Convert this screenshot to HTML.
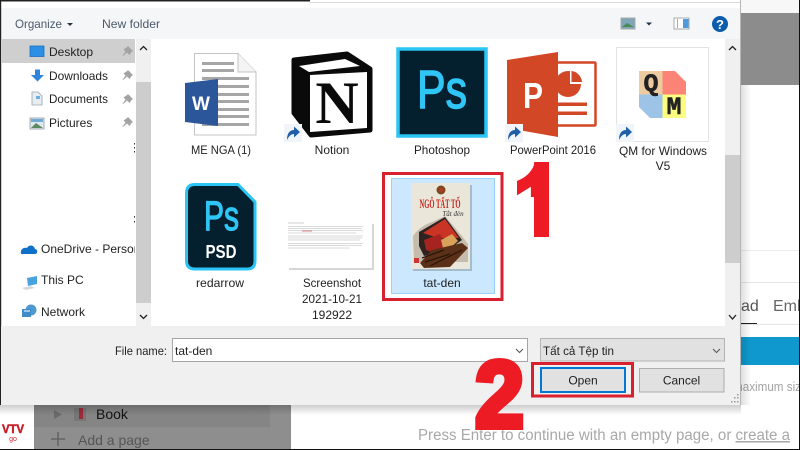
<!DOCTYPE html>
<html><head><meta charset="utf-8"><title>Open dialog</title>
<style>
html,body{margin:0;padding:0;background:#fff;width:800px;height:450px;overflow:hidden}
svg{display:block;filter:blur(.3px)}
text{font-family:"Liberation Sans","Noto Sans CJK JP",sans-serif}
.t{font-size:12px;fill:#1f1f1f}
.m{text-anchor:middle}
</style></head><body>
<svg width="800" height="450" viewBox="0 0 800 450" xmlns="http://www.w3.org/2000/svg">
<defs>
<linearGradient id="sr" x1="0" x2="1" y1="0" y2="0"><stop offset="0" stop-color="#000" stop-opacity=".28"/><stop offset="1" stop-color="#000" stop-opacity="0"/></linearGradient>
<linearGradient id="sb" x1="0" x2="0" y1="0" y2="1"><stop offset="0" stop-color="#000" stop-opacity=".28"/><stop offset="1" stop-color="#000" stop-opacity="0"/></linearGradient>
<clipPath id="navclip"><rect x="0" y="39" width="135" height="290"/></clipPath>
<clipPath id="one"><path d="M549 160 V237 H534 V197 H517 V181 Q530 176 534 165 V160Z"/></clipPath>
<g id="sc"><rect x="0" y="0" width="18" height="18" fill="#f1f4f8"/><path d="M3 16 C3 9 6 6 10 6 V2.500 L16 8 L10 13.500 V10 C7 10 5 12 3 16Z" fill="#1f5fa8"/></g>
<g id="pin" fill="#a3a3a3"><path d="M6 0 L11 5 L9.500 6 L7.500 9 L5 6.500 L1 10 L0.500 9.500 L3.500 5.500 L1.500 3.500 L4.500 1.500Z"/></g>
</defs>

<!-- backdrop -->
<rect width="800" height="450" fill="#fff"/>
<rect x="741" y="0" width="59" height="13" fill="#f7f7f7"/>
<rect x="741" y="13" width="59" height="72" fill="#8c8c8c"/>
<rect x="741" y="250" width="58" height="1" fill="#ececec"/>
<rect x="741" y="282" width="58" height="1" fill="#e6e6e6"/>
<text x="773" y="311" font-size="16" fill="#666">Emb</text>
<text x="741" y="311" font-size="16" fill="#555">ad</text>
<rect x="741" y="323" width="16" height="1.500" fill="#222"/>
<rect x="741" y="324" width="58" height="1" fill="#e6e6e6"/>
<rect x="741" y="337" width="58" height="28" fill="#0e98cd"/>
<text x="733" y="391" font-size="12.500" fill="#a3a3a3" textLength="68" lengthAdjust="spacingAndGlyphs">maximum siz</text>

<!-- bottom left page -->
<rect x="34" y="405" width="257" height="45" fill="#8e8e8e"/>
<rect x="34" y="405" width="236" height="22" fill="#858585"/>
<path d="M54 410 L62 414.500 L54 419Z" fill="#6a6a6a"/>
<rect x="74" y="408" width="12" height="13" fill="#777"/>
<rect x="79" y="408" width="4" height="11" fill="#a12a3a"/>
<text x="96" y="419" font-size="14" fill="#111">Book</text>
<path d="M58 432 V446 M51 439 H65" stroke="#5d5d5d" stroke-width="1.300" fill="none"/>
<text x="78" y="445" font-size="14" fill="#555">Add a page</text>
<rect x="0" y="405" width="34" height="45" fill="#fff"/>
<text x="13" y="433" class="m" font-size="12" font-weight="bold" fill="#c8202a" stroke="#c8202a" stroke-width=".5" textLength="22" lengthAdjust="spacingAndGlyphs">VTV</text>
<text x="13" y="441" class="m" font-size="7" fill="#c8202a">go</text>
<text x="418" y="440" font-size="15.500" fill="#a8a8a8" textLength="372" lengthAdjust="spacingAndGlyphs">Press Enter to continue with an empty page, or <tspan text-decoration="underline">create a</tspan></text>

<!-- shadows -->
<rect x="741" y="85" width="10" height="320" fill="url(#sr)" opacity=".45"/>
<rect x="0" y="405" width="741" height="10" fill="url(#sb)" opacity=".7"/>

<!-- dialog -->
<rect x="0" y="0" width="741" height="405" fill="#fff"/>
<rect x="1" y="8" width="740" height="31" fill="#f5f6f7"/>
<rect x="0" y="0" width="310" height="1.500" fill="#222"/>
<rect x="310" y="2" width="430" height="1" fill="#dcdcdc"/>
<rect x="0" y="0" width="1.200" height="405" fill="#222"/>
<rect x="1" y="326" width="740" height="79" fill="#f0f0f0"/>
<rect x="740" y="0" width="1" height="405" fill="#b5b5b5"/>
<rect x="0" y="449" width="800" height="1" fill="#111"/>
<rect x="799" y="0" width="1" height="450" fill="#111"/>

<!-- toolbar -->
<text x="15" y="28" font-size="12" fill="#4a5a6b" textLength="47" lengthAdjust="spacingAndGlyphs">Organize</text>
<path d="M67 23 H73 L70 26Z" fill="#263545"/>
<text x="102" y="28" font-size="12" fill="#4a5a6b" textLength="58" lengthAdjust="spacingAndGlyphs">New folder</text>
<rect x="621" y="18" width="14" height="11" fill="#7fa5b8" stroke="#a9a9a9"/>
<path d="M622 27 L627 23 L634 27Z" fill="#4c8a55"/>
<path d="M646 22.500 H652 L649 25.500Z" fill="#1a3050"/>
<rect x="674" y="18" width="15" height="11" fill="#fff" stroke="#a9a9a9"/>
<rect x="683" y="19" width="5.500" height="9" fill="#4f9be0"/>
<rect x="677" y="19" width="1" height="9" fill="#aaa"/>
<circle cx="720" cy="24" r="8" fill="#0b5cac"/>
<text x="720" y="29" class="m" font-size="13" font-weight="bold" fill="#fff">?</text>

<!-- nav pane -->
<rect x="1" y="39" width="134" height="24" fill="#cfcfcf"/>
<rect x="30" y="46" width="14" height="10.500" fill="#2b8fe3" stroke="#1570c0" stroke-width=".8"/>
<path d="M31 75 H35 V69.500 H40 V75 H44 L37.500 81.500Z" fill="#2f86d8"/>
<path d="M32 92 H38 L42 96 V105 H32Z" fill="#e8edf2" stroke="#9aa4ad" stroke-width=".8"/>
<rect x="36" y="96" width="4" height="3" fill="#6ab0e0"/>
<rect x="30" y="118" width="14" height="11" fill="#dfe8ef" stroke="#8a98a5" stroke-width=".8"/>
<path d="M31 128 L36 123 L43 128Z" fill="#5b8a60"/>
<rect x="31" y="119" width="12" height="3" fill="#6fa9d6"/>
<g class="t" clip-path="url(#navclip)">
<text x="49" y="56" class="t">Desktop</text>
<text x="49" y="80" class="t" textLength="59" lengthAdjust="spacingAndGlyphs">Downloads</text>
<text x="49" y="103" class="t" textLength="59" lengthAdjust="spacingAndGlyphs">Documents</text>
<text x="49" y="127" class="t">Pictures</text>
<text x="41" y="253" class="t">OneDrive - Personal</text>
<text x="41" y="284" class="t">This PC</text>
<text x="41" y="316" class="t">Network</text>
</g>
<use href="#pin" x="122" y="46"/><use href="#pin" x="122" y="70"/><use href="#pin" x="122" y="94"/><use href="#pin" x="122" y="117"/>
<rect x="134" y="143" width="1" height="1.500" fill="#333"/><rect x="134" y="147" width="1" height="1.500" fill="#333"/><rect x="134" y="151" width="1" height="1.500" fill="#333"/>
<rect x="134" y="216" width="1" height="1.500" fill="#333"/><rect x="134" y="221" width="1" height="1.500" fill="#333"/>
<path d="M21 254 C20 249 24 247 27 248 C29 244 34 245 35 249 C38 249 38 254 35 254Z" fill="#0f72c8"/>
<path d="M27 278 L37 276 V284 L28 286Z" fill="#4aa2dc"/><path d="M22 288 L31 286 L35 288 L26 290Z" fill="#d5d9dc"/>
<circle cx="31" cy="310" r="5.500" fill="#4e9ad0"/><rect x="22" y="309" width="9" height="8" fill="#3f8cc8"/><path d="M24 311 H30" stroke="#fff"/>

<rect x="136" y="39" width="15" height="287" fill="#f0f0f0"/>
<rect x="136" y="82" width="15" height="221" fill="#cdcdcd"/>
<path d="M140 50 L143.500 46.500 L147 50" stroke="#222" stroke-width="1.300" fill="none"/>
<path d="M140 315 L143.500 318.500 L147 315" stroke="#222" stroke-width="1.300" fill="none"/>

<rect x="725" y="39" width="15" height="287" fill="#f0f0f0"/>
<rect x="725" y="155" width="15" height="108" fill="#cdcdcd"/>
<path d="M729 50 L732.500 46.500 L736 50" stroke="#222" stroke-width="1.300" fill="none"/>
<path d="M729 315 L732.500 319 L736 315" stroke="#222" stroke-width="1.300" fill="none"/>

<!-- Word -->
<path d="M194.500 53.500 H238 L256 72 V135 H194.500Z" fill="#fff" stroke="#c4c4c4"/>
<path d="M238 53.500 V72 H256" fill="#f4f4f4" stroke="#c4c4c4"/>
<g fill="#a6a6a6"><rect x="202" y="62" width="32" height="3"/><rect x="202" y="69" width="32" height="3"/><rect x="202" y="77" width="47" height="3"/><rect x="202" y="85" width="47" height="3"/><rect x="217" y="93" width="32" height="3"/><rect x="217" y="100" width="32" height="3"/><rect x="217" y="108" width="32" height="3"/><rect x="217" y="115" width="32" height="3"/><rect x="202" y="123" width="47" height="3"/></g>
<path d="M185 83 L218 79 V126 L185 122Z" fill="#2b579a"/>
<text x="201" y="110" class="m" font-size="19" font-weight="bold" fill="#fff">W</text>
<text x="221" y="154" class="t m" textLength="60" lengthAdjust="spacingAndGlyphs">ME NGA (1)</text>

<!-- Notion -->
<path d="M294 60 L347 54 L370 69 V130 L311 135 L294 113Z" fill="#0a0a0a" stroke="#0a0a0a" stroke-width="5" stroke-linejoin="round"/>
<path d="M299 66 L345 59 L360 66 L309 72Z" fill="#fff"/>
<path d="M310 75 L367 72 V128 L310 132Z" fill="#fff"/>
<text x="337" y="123" class="m" style="font-family:'Liberation Serif',serif" font-size="60" font-weight="bold" fill="#0a0a0a">N</text>
<use href="#sc" x="284" y="124"/>
<text x="332" y="154" class="t m">Notion</text>

<!-- Photoshop -->
<rect x="398" y="49" width="88" height="87" fill="#04202f" stroke="#2ac5f4" stroke-width="3.500"/>
<text x="417" y="108" font-size="54" fill="#2fc6f6" stroke="#2fc6f6" stroke-width="1.400" textLength="50" lengthAdjust="spacingAndGlyphs">Ps</text>
<text x="442" y="154" class="t m" textLength="56" lengthAdjust="spacingAndGlyphs">Photoshop</text>

<!-- PowerPoint -->
<rect x="552" y="62.500" width="43.500" height="63" fill="#fff" stroke="#d24726" stroke-width="2.500" rx="1"/>
<path d="M507 60 L558 52 V137 L507 128Z" fill="#d24726"/>
<circle cx="568" cy="84" r="13" fill="#d24726"/>
<path d="M570 71 A13 13 0 0 1 582 84 H570Z" fill="#fff"/>
<path d="M571.500 71 A12 12 0 0 1 582 82 H571.500Z" fill="#d24726"/>
<rect x="558" y="102.500" width="29" height="3.500" fill="#d24726"/>
<rect x="558" y="111.500" width="29" height="3.500" fill="#d24726"/>
<text x="533" y="108" class="m" font-size="36" font-weight="bold" fill="#fff" textLength="20" lengthAdjust="spacingAndGlyphs">P</text>
<use href="#sc" x="505" y="124"/>
<text x="553" y="154" class="t m" textLength="86" lengthAdjust="spacingAndGlyphs">PowerPoint 2016</text>

<!-- QM -->
<rect x="616.500" y="47.500" width="92" height="94" fill="#fff" stroke="#e3e3e3"/>
<path d="M639 71 H662.500 V94.500 H639Z" fill="#edcba0"/>
<path d="M662.500 71 H675 L686 82 V94.500 H662.500Z" fill="#fb8476"/>
<path d="M639 94.500 H662.500 V118 H650 L639 107Z" fill="#9dc3e6"/>
<path d="M662.500 94.500 H686 V118 H662.500Z" fill="#fcfc80"/>
<text x="651" y="91" class="m" style="font-family:'Liberation Mono',monospace" font-size="25" font-weight="bold" fill="#222" stroke="#222" stroke-width=".5">Q</text>
<text x="674" y="114" class="m" style="font-family:'Liberation Mono',monospace" font-size="25" font-weight="bold" fill="#222" stroke="#222" stroke-width=".5">M</text>
<use href="#sc" x="616" y="124"/>
<text x="663" y="155" class="t m" textLength="88" lengthAdjust="spacingAndGlyphs">QM for Windows</text>
<text x="663" y="170" class="t m">V5</text>

<!-- PSD -->
<path d="M195 184.500 H238 L255 202 V261 Q255 269 247 269 H195 Q186.500 269 186.500 261 V193 Q186.500 184.500 195 184.500Z" fill="#04202f" stroke="#2ac5f4" stroke-width="3"/>
<text x="204" y="230" font-size="42" fill="#2fc6f6" stroke="#2fc6f6" stroke-width="1.200" textLength="35" lengthAdjust="spacingAndGlyphs">Ps</text>
<text x="221" y="258" class="m" font-size="18" font-weight="bold" fill="#fff" textLength="31" lengthAdjust="spacingAndGlyphs">PSD</text>
<text x="220" y="287" class="t m" textLength="48" lengthAdjust="spacingAndGlyphs">redarrow</text>

<!-- screenshot thumb -->
<rect x="289" y="224" width="85" height="46" fill="#b5b5b5" opacity=".55"/>
<rect x="287" y="222" width="85" height="46" fill="#fff"/>
<g stroke="#a2a2a2" stroke-width=".6" opacity=".8"><path d="M288 223 H304"/><path d="M288 226.500 H363"/><path d="M288 228.500 H362"/><path d="M288 230.500 H363"/><path d="M288 233 H356"/><path d="M288 236 H363"/><path d="M288 238 H362"/><path d="M288 240 H360"/><path d="M288 243.500 H363"/><path d="M288 245.500 H362"/><path d="M288 248 H350"/></g>
<path d="M302 231 H312" stroke="#d08080" stroke-width="1"/>
<text x="332" y="287" class="t m" textLength="58" lengthAdjust="spacingAndGlyphs">Screenshot</text>
<text x="332" y="303" class="t m" textLength="60" lengthAdjust="spacingAndGlyphs">2021-10-21</text>
<text x="332" y="319" class="t m">192922</text>

<!-- selected item -->
<rect x="391.500" y="178.500" width="103" height="115" fill="#cce8ff" stroke="#99d1ff"/>
<rect x="413" y="185" width="59" height="86" fill="#7d8f9c" opacity=".5"/>
<rect x="411" y="183" width="59" height="86" fill="#ebe6da"/>
<circle cx="441" cy="190" r="4.500" fill="#7a4a1e"/><circle cx="441" cy="190" r="2" fill="#b8372a"/>
<text x="440" y="208" class="m" style="font-family:'Liberation Serif',serif" font-size="13" font-weight="bold" fill="#c4261d" textLength="41" lengthAdjust="spacingAndGlyphs">NGÔ TẤT TỐ</text>
<text x="453" y="216" class="m" style="font-family:'Liberation Serif',serif" font-size="7" font-style="italic" fill="#333">Tắt đèn</text>
<path d="M414 262 L413 236 Q420 226 432 222 L445 216 L462 236 L468 244 V262Z" fill="#b5a99a" opacity=".7"/>
<path d="M419 232 L445 217 L462 240 L445 252 L424 256 L419 246Z" fill="#2e2320"/>
<path d="M423 233 L445 219 L459 238 L438 238Z" fill="#c93424"/>
<path d="M424 240 L440 234 L446 246 L436 253 L426 250Z" fill="#a62420"/>
<path d="M441 240 L452 234 L458 241 L449 249 L443 248Z" fill="#d9a15a"/>
<path d="M420 263 L432 250 L462 243 L468 248 L450 267 L424 268Z" fill="#5a3018"/>
<path d="M425 262 L450 254 M430 266 L462 250 M422 258 L444 250" stroke="#2a1608" stroke-width="1.200"/>
<rect x="414" y="258" width="5" height="5" fill="#c33"/>
<text x="442" y="287" class="t m">tat-den</text>
<rect x="383.500" y="173.500" width="118.500" height="126" fill="none" stroke="#d9202e" stroke-width="3"/>

<!-- bottom controls -->
<text x="115" y="355" class="t" textLength="52" lengthAdjust="spacingAndGlyphs">File name:</text>
<rect x="172.500" y="338.500" width="355" height="23" fill="#fff" stroke="#a6a6a6"/>
<text x="175" y="355" class="t">tat-den</text>
<path d="M516 349 L519.500 352.500 L523 349" stroke="#555" fill="none"/>
<rect x="540.500" y="338.500" width="184" height="22.500" fill="#e1e1e1" stroke="#b3b3b3"/>
<text x="543" y="355" class="t" textLength="71" lengthAdjust="spacingAndGlyphs">Tất cả Tệp tin</text>
<path d="M713 349 L716.500 352.500 L720 349" stroke="#555" fill="none"/>
<rect x="541" y="368" width="84" height="24" fill="#e1e1e1" stroke="#0078d7" stroke-width="2"/>
<text x="583" y="384.500" class="t m">Open</text>
<rect x="639.500" y="368.500" width="84.500" height="23.500" fill="#e1e1e1" stroke="#adadad"/>
<text x="681.500" y="384.500" class="t m">Cancel</text>
<rect x="532.500" y="363.500" width="100" height="32.500" fill="none" stroke="#d9202e" stroke-width="3"/>
<g fill="#9a9a9a"><rect x="737" y="394" width="1.500" height="1.500"/><rect x="734" y="397" width="1.500" height="1.500"/><rect x="737" y="397" width="1.500" height="1.500"/><rect x="731" y="401" width="1.500" height="1.500"/><rect x="734" y="401" width="1.500" height="1.500"/><rect x="737" y="401" width="1.500" height="1.500"/></g>

<!-- big numerals -->
<g clip-path="url(#one)"><text x="540" y="238" class="m" font-size="104" font-weight="bold" fill="#ed1c24" stroke="#ed1c24" stroke-width="9">1</text></g>
<text x="499.500" y="427" class="m" font-size="95" font-weight="bold" fill="#ed1c24" stroke="#ed1c24" stroke-width="6" textLength="49" lengthAdjust="spacingAndGlyphs">2</text>
</svg>
</body></html>
